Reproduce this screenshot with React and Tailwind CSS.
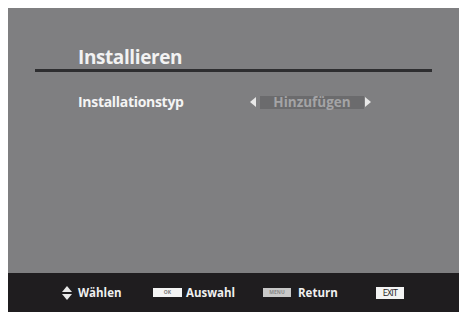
import React from "react";

export default function App() {
  const font = { fontFamily: '"Open Sans", "Noto Sans", sans-serif' };
  return (
    <div className="w-[462px] h-[312px] bg-white pl-[8px] pt-[8px] overflow-hidden" style={font}>
      <div className="w-[451px] h-[304px] flex flex-col bg-[#7f7f81]">
        <div className="flex-1 flex flex-col">
          <div className="pl-[70px] pt-[37px] h-[61px] text-[19px] leading-[24px] font-bold text-[#f2f2f2] tracking-[-0.4px]">
            Installieren
          </div>
          <div className="ml-[27px] w-[397px] h-[3px] bg-[#2e2e30]" />
          <div className="flex items-center pl-[70px] mt-[22px] h-[16px]">
            <div className="w-[172px] text-[14px] leading-[16px] font-bold text-[#f4f4f4] tracking-[-0.3px]">
              Installationstyp
            </div>
            <div className="flex items-center">
              <svg width="7" height="10" viewBox="0 0 7 10" className="mr-[3px]">
                <polygon points="6,0 6,10 0,5" fill="#e8e8e8" />
              </svg>
              <div className="w-[104px] h-[13px] bg-[#6b6b6d] flex items-center justify-center text-[13.5px] leading-[13px] font-bold text-[#a4a4a6]">
                Hinzufügen
              </div>
              <svg width="7" height="10" viewBox="0 0 7 10" className="ml-[1px]">
                <polygon points="0,0 0,10 6,5" fill="#e8e8e8" />
              </svg>
            </div>
          </div>
        </div>
        <div className="h-[39px] bg-[#1f1d1f] flex items-center pl-[54px] text-[11.5px] font-bold text-[#f0f0f0]">
          <svg width="10" height="14" viewBox="0 0 10 14" className="mr-[6px]">
            <polygon points="5,0 10,6 0,6" fill="#e8e8e8" />
            <polygon points="0,8 10,8 5,14" fill="#e8e8e8" />
          </svg>
          <span className="w-[75px]">Wählen</span>
          <div className="w-[29px] h-[9px] bg-[#f4f4f4] flex items-center justify-center text-[5px] leading-[5px] text-[#777] mr-[4px]">
            OK
          </div>
          <span className="w-[77px]">Auswahl</span>
          <div className="w-[28px] h-[9px] bg-[#c8c8c8] flex items-center justify-center text-[5px] leading-[5px] text-[#888] mr-[7px]">
            MENU
          </div>
          <span className="w-[78px]">Return</span>
          <div className="w-[28px] h-[12px] bg-[#f4f4f4] flex items-center justify-center text-[9px] leading-[9px] font-normal text-[#222] tracking-[-0.8px]">
            EXIT
          </div>
        </div>
      </div>
    </div>
  );
}
